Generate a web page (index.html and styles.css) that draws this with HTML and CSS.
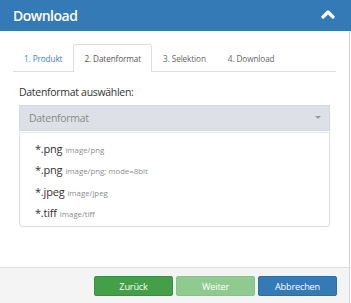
FILE: index.html
```html
<!DOCTYPE html>
<html lang="de">
<head>
<meta charset="utf-8">
<link rel="stylesheet" href="styles.css">
</head>
<body>
<div class="dialog">
  <div class="header">
    <span class="title">Download</span>
    <svg class="chev" width="14" height="9" viewBox="0 0 14 9"><polyline points="2,7 7,2 12,7" fill="none" stroke="#fff" stroke-width="3.2" stroke-linecap="round" stroke-linejoin="round"/></svg>
  </div>
  <div class="main">
    <ul class="tabs">
      <li class="tab link">1. Produkt</li>
      <li class="tab active">2. Datenformat</li>
      <li class="tab">3. Selektion</li>
      <li class="tab">4. Download</li>
    </ul>
    <div class="form">
      <div class="label">Datenformat auswählen:</div>
      <div class="select">
        <span class="placeholder">Datenformat</span>
        <span class="caret"></span>
      </div>
      <ul class="options">
        <li class="opt"><span class="ext">*.png</span><span class="mime">image/png</span></li>
        <li class="opt"><span class="ext">*.png</span><span class="mime">image/png; mode=8bit</span></li>
        <li class="opt"><span class="ext">*.jpeg</span><span class="mime">image/jpeg</span></li>
        <li class="opt"><span class="ext">*.tiff</span><span class="mime">image/tiff</span></li>
      </ul>
    </div>
  </div>
  <div class="footer">
    <button class="btn green">Zurück</button>
    <button class="btn lightgreen">Weiter</button>
    <button class="btn blue">Abbrechen</button>
  </div>
</div>
</body>
</html>
```
FILE: styles.css
```css
html, body {
  margin: 0;
  padding: 0;
  background: #fff;
}
body {
  font-family: "Open Sans", "Noto Sans", sans-serif;
  color: #333;
}
.dialog {
  width: 351px;
  height: 303px;
  display: flex;
  flex-direction: column;
}
.header {
  height: 31px;
  background: #337ab7;
  display: flex;
  align-items: center;
  justify-content: space-between;
  padding: 0 16px 0 13px;
  box-sizing: border-box;
}
.title {
  color: #fff;
  font-size: 14px;
  font-weight: 600;
  letter-spacing: -0.5px;
}
.chev {
  display: block;
  margin-top: -2px;
}
.main {
  width: 350px;
  height: 236px;
  box-sizing: border-box;
  border-right: 1px solid #d4d4d4;
  padding-top: 13px;
}
.tabs {
  list-style: none;
  margin: 0 13px;
  padding: 0;
  display: flex;
  border-bottom: 1px solid #ddd;
  height: 27px;
  box-sizing: content-box;
}
.tab {
  padding: 0 10px;
  font-size: 8.2px;
  line-height: 25px;
  color: #666;
  border: 1px solid transparent;
  border-bottom: none;
  border-radius: 3px 3px 0 0;
  margin-top: 1px;
  letter-spacing: -0.1px;
}
.tab.link {
  color: #2b85d8;
}
.tab.active {
  color: #555;
  border-color: #ddd;
  background: #fff;
  margin-top: 0;
  margin-bottom: -1px;
  line-height: 27px;
}
.form {
  margin: 0 19px;
}
.label {
  font-size: 10.5px;
  margin-top: 12px;
  line-height: 16px;
  letter-spacing: -0.3px;
}
.select {
  margin-top: 5px;
  height: 26px;
  box-sizing: border-box;
  background: #dde1e7;
  border: 1px solid #d5d9df;
  display: flex;
  align-items: center;
  justify-content: space-between;
  padding: 0 8px 0 9px;
}
.placeholder {
  font-size: 10.5px;
  color: #8a8a8a;
  letter-spacing: -0.3px;
}
.caret {
  width: 0;
  height: 0;
  border-left: 3.5px solid transparent;
  border-right: 3.5px solid transparent;
  border-top: 3.5px solid #999;
  margin-top: -1px;
}
.options {
  list-style: none;
  margin: 1px 0 0;
  padding: 5px 0 5px 15px;
  border: 1px solid #ddd;
  border-top: 1px solid #e8e8e8;
  border-radius: 0 0 4px 4px;
  height: 95px;
  box-sizing: border-box;
}
.opt {
  height: 21.3px;
  line-height: 21px;
  display: flex;
  align-items: baseline;
  gap: 3px;
}
.ext {
  font-size: 11px;
  color: #333;
  letter-spacing: -0.2px;
}
.mime {
  font-size: 7.8px;
  color: #8c8c8c;
}
.footer {
  flex: 1;
  width: 350px;
  box-sizing: border-box;
  border-top: 1px solid #ddd;
  border-right: 1px solid #d4d4d4;
  background: #f4f4f4;
  display: flex;
  justify-content: flex-end;
  align-items: flex-start;
  gap: 3px;
  padding: 8px 12px 0 0;
}
.btn {
  width: 79px;
  height: 20px;
  border-radius: 2px;
  border: 1px solid transparent;
  font-family: "Open Sans", "Noto Sans", sans-serif;
  font-size: 9.2px;
  color: #fff;
  padding: 0;
  letter-spacing: -0.2px;
}
.btn.green {
  background: #43a047;
  border-color: #3a8f3e;
}
.btn.lightgreen {
  background: #8fcb8f;
  border-color: #86c386;
}
.btn.blue {
  background: #337ab7;
  border-color: #2e6da4;
}
```
